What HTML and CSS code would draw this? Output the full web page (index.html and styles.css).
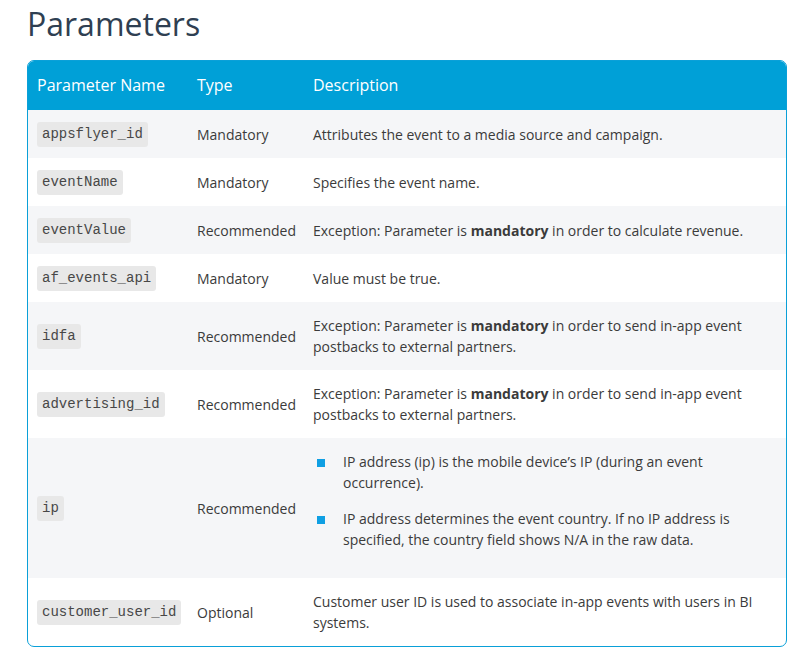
FILE: index.html
```html
<!DOCTYPE html>
<html>
<head>
<meta charset="utf-8">
<link rel="stylesheet" href="styles.css">
</head>
<body>
<div class="page">
  <h1 class="title">Parameters</h1>
  <div class="table-wrap">
    <table class="params">
      <colgroup>
        <col class="c-name">
        <col class="c-type">
        <col class="c-desc">
      </colgroup>
      <thead>
        <tr><th>Parameter Name</th><th>Type</th><th>Description</th></tr>
      </thead>
      <tbody>
        <tr class="shade"><td><code class="chip">appsflyer_id</code></td><td>Mandatory</td><td>Attributes the event to a media source and campaign.</td></tr>
        <tr><td><code class="chip">eventName</code></td><td>Mandatory</td><td>Specifies the event name.</td></tr>
        <tr class="shade"><td><code class="chip">eventValue</code></td><td>Recommended</td><td>Exception: Parameter is <strong>mandatory</strong> in order to calculate revenue.</td></tr>
        <tr><td><code class="chip">af_events_api</code></td><td>Mandatory</td><td>Value must be true.</td></tr>
        <tr class="shade"><td><code class="chip">idfa</code></td><td>Recommended</td><td>Exception: Parameter is <strong>mandatory</strong> in order to send in-app event postbacks to external partners.</td></tr>
        <tr><td><code class="chip">advertising_id</code></td><td>Recommended</td><td>Exception: Parameter is <strong>mandatory</strong> in order to send in-app event postbacks to external partners.</td></tr>
        <tr class="shade"><td><code class="chip">ip</code></td><td>Recommended</td><td>
          <ul class="bullets">
            <li>IP address (ip) is the mobile device’s IP (during an event occurrence).</li>
            <li>IP address determines the event country. If no IP address is specified, the country field shows N/A in the raw data.</li>
          </ul>
        </td></tr>
        <tr><td><code class="chip">customer_user_id</code></td><td>Optional</td><td>Customer user ID is used to associate in-app events with users in BI systems.</td></tr>
      </tbody>
    </table>
  </div>
</div>
</body>
</html>
```

FILE: styles.css
```css
html, body {
  margin: 0;
  padding: 0;
  background: #ffffff;
}
.page {
  padding: 5px 18px 0 27px;
  font-family: "Open Sans", "Liberation Sans", sans-serif;
}
.title {
  margin: 0 0 17px 0;
  font-size: 32px;
  line-height: 38px;
  font-weight: 400;
  color: #2f3f52;
}
.table-wrap {
  width: 758px;
  border: 1px solid #0aa0d8;
  border-radius: 7px;
  overflow: hidden;
}
.params {
  width: 100%;
  border-collapse: collapse;
  table-layout: fixed;
  font-size: 14px;
  line-height: 21px;
  color: #3b3b3b;
}
.c-name { width: 160px; }
.c-type { width: 116px; }
.params thead th {
  background: #00a0d7;
  color: #ffffff;
  font-weight: 400;
  font-size: 16px;
  text-align: left;
  padding: 0 9px;
  height: 49px;
}
.params td {
  padding: 13px 9px;
  vertical-align: middle;
}
.params tr.shade td {
  background: #f5f6f8;
}
.chip {
  display: inline-block;
  vertical-align: top;
  font-family: "Liberation Mono", "Courier New", monospace;
  font-size: 14px;
  line-height: 25px;
  margin: -1.5px 0;
  padding: 0 5px;
  background: #e8e8e8;
  border-radius: 3px;
  color: #474747;
}
.params strong {
  font-weight: 700;
}
.bullets {
  list-style: none;
  margin: 0 0 15px 0;
  padding: 0 0 0 30px;
}
.bullets li {
  position: relative;
  margin: 0 0 15px 0;
}
.bullets li:last-child {
  margin-bottom: 0;
}
.bullets li::before {
  content: "";
  position: absolute;
  left: -26px;
  top: 8px;
  width: 8px;
  height: 8px;
  background: #0f9fe3;
}
```
